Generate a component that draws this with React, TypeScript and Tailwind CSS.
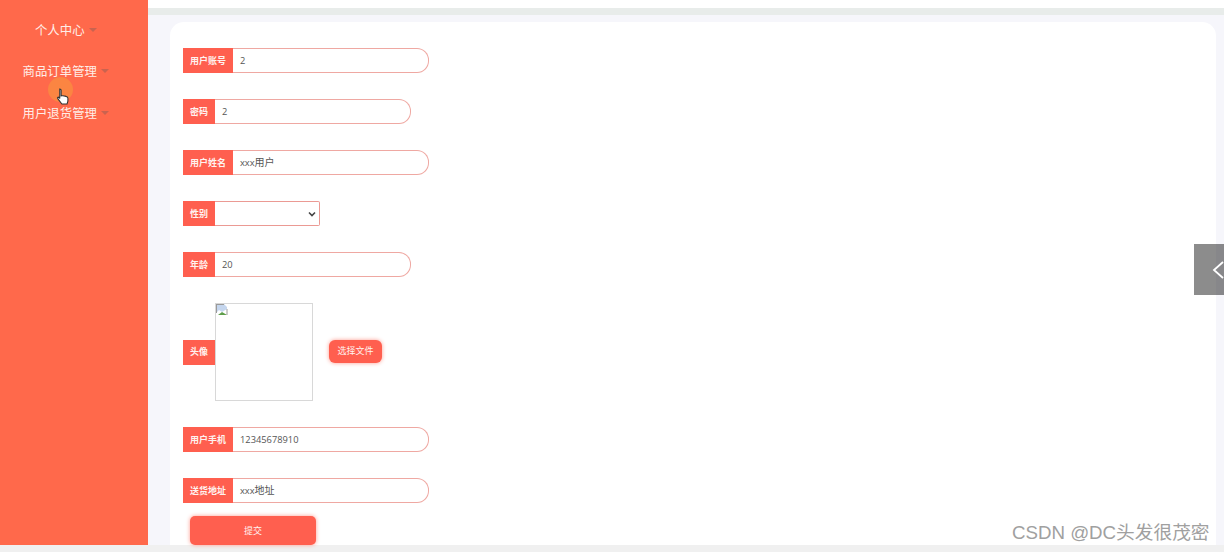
import type { ReactNode } from 'react';

const cjk = '"Noto Sans CJK SC", sans-serif';

const menus = ['个人中心', '商品订单管理', '用户退货管理'];

function Label({ text, wide }: { text: string; wide: boolean }) {
  return (
    <span
      className={`flex h-[25px] shrink-0 items-center justify-center bg-[#ff5f4f] text-[9px] font-bold text-[#fff3f0] ${
        wide ? 'w-[50px]' : 'w-[32px]'
      }`}
    >
      {text}
    </span>
  );
}

function Field({ label, value, mt }: { label: string; value: ReactNode; mt: string }) {
  const wide = label.length > 2;
  return (
    <div className={`flex items-center ${mt}`}>
      <Label text={label} wide={wide} />
      <div className="flex h-[25px] w-[196px] items-center rounded-r-[12px] border border-l-0 border-[#efa8a2] bg-white pl-[7px] text-[9.3px] text-[#555555]">
        <span>{value}</span>
      </div>
    </div>
  );
}

export default function App() {
  return (
    <div className="relative flex h-[552px] w-[1224px] flex-col overflow-hidden bg-[#f0f0f0] font-['Open_Sans','Noto_Sans_CJK_SC',sans-serif]">
      <div className="flex h-[545px] w-full">
        <aside className="flex w-[147.500px] shrink-0 flex-col items-center gap-[25.500px] bg-[#ff694b] pr-[16px] pt-[22px] text-[12.400px] text-[#ffeee8]">
          {menus.map((m) => (
            <div key={m} className="flex h-[16px] items-center gap-[4px]" style={{ fontFamily: cjk }}>
              {m}
              <span className="mt-[-1px] h-0 w-0 border-x-[4px] border-t-[4px] border-x-transparent border-t-[#c9634f]" />
            </div>
          ))}
        </aside>

        <main className="flex min-w-0 flex-1 flex-col bg-[#f6f6fb]">
          <div className="h-[8px] bg-white" />
          <div className="h-[7px] bg-[#e8ecea]" />
          <div className="mr-[8px] ml-[22.500px] mt-[7px] flex-1 rounded-t-[14px] bg-white pl-[13px] pt-[26px]">
            <Field label="用户账号" value="2" mt="" />
            <Field label="密码" value="2" mt="mt-[26px]" />
            <Field
              label="用户姓名"
              value={
                <>
                  xxx<span className="text-[10px]">用户</span>
                </>
              }
              mt="mt-[26px]"
            />
            <div className="mt-[26px] flex items-center">
              <Label text="性别" wide={false} />
              <div className="flex h-[25px] w-[105px] items-center justify-end rounded-r-[2px] border border-l-0 border-[#eb9a94] bg-white pr-[3px]">
                <svg width="8" height="6" viewBox="0 0 8 6" fill="none" stroke="#444444" strokeWidth="1.6">
                  <path d="M1 1.5 4 4.5 7 1.5" />
                </svg>
              </div>
            </div>
            <Field label="年龄" value="20" mt="mt-[26px]" />
            <div className="mt-[26px] flex items-center">
              <Label text="头像" wide={false} />
              <div className="h-[98px] w-[98px] border border-[#d8d8d8] bg-white">
                <svg width="12" height="12" viewBox="0 0 12 12">
                  <path d="M0 0h8l3 3v2L6 8 3 6 0 9z" fill="#c5d6ee" />
                  <path d="M0 0h8v1H1v8H0z" fill="#9a9a9a" />
                  <path d="M2 11 6 8l5 3z" fill="#5e9e4a" />
                  <path d="M11 5v6" stroke="#9a9a9a" strokeWidth="1" />
                </svg>
              </div>
              <button className="ml-[16px] mt-[-2px] flex h-[23px] w-[53px] items-center justify-center rounded-[6px] bg-[#ff5f4f] text-[9px] text-[#fff3f0] shadow-[0_0_4px_#ff9c90]">
                选择文件
              </button>
            </div>
            <Field label="用户手机" value="12345678910" mt="mt-[26px]" />
            <Field
              label="送货地址"
              value={
                <>
                  xxx<span className="text-[10px]">地址</span>
                </>
              }
              mt="mt-[26px]"
            />
            <button className="ml-[7px] mt-[13px] flex h-[29px] w-[126px] items-center justify-center rounded-[5px] bg-[#ff5f4f] text-[9px] text-[#fff3f0] shadow-[0_0_4px_#ff9c90]">
              提交
            </button>
          </div>
        </main>
      </div>

      {/* cursor highlight */}
      <div className="absolute left-[48px] top-[77px] h-[25px] w-[25px] rounded-full bg-[#fb8542]" />
      <svg className="absolute left-[56px] top-[87px]" width="15" height="20" viewBox="0 0 14 18">
        <path
          d="M3.500 1.500c.8 0 1.300.5 1.300 1.300V8l.8-.2h1l.9.3 1 .1 1 .4 1 .4.6 1v3l-.8 2.500H5.500L2 11l-.6-1.200.6-.6 1 .3.500 1V2.800c0-.8 0-1.300 0-1.300z"
          fill="#ffffff"
          stroke="#333333"
          strokeWidth="1"
        />
      </svg>

      {/* side collapse tab */}
      <div className="absolute right-0 top-[244px] h-[51px] w-[30px] overflow-hidden bg-black/45">
        <svg className="absolute left-[18px] top-[17px]" width="12" height="18" viewBox="0 0 12 18" fill="none" stroke="#ffffff" strokeWidth="1.800">
          <path d="M11 1 2 9l9 8" />
        </svg>
      </div>

      {/* watermark */}
      <div
        className="absolute left-[1012px] top-[520px] text-[18.700px] leading-[26px] whitespace-nowrap text-[#a0a0a0]"
        style={{ fontFamily: '"Liberation Sans", "Noto Sans CJK SC", sans-serif' }}
      >
        CSDN @DC头发很茂密
      </div>
    </div>
  );
}
